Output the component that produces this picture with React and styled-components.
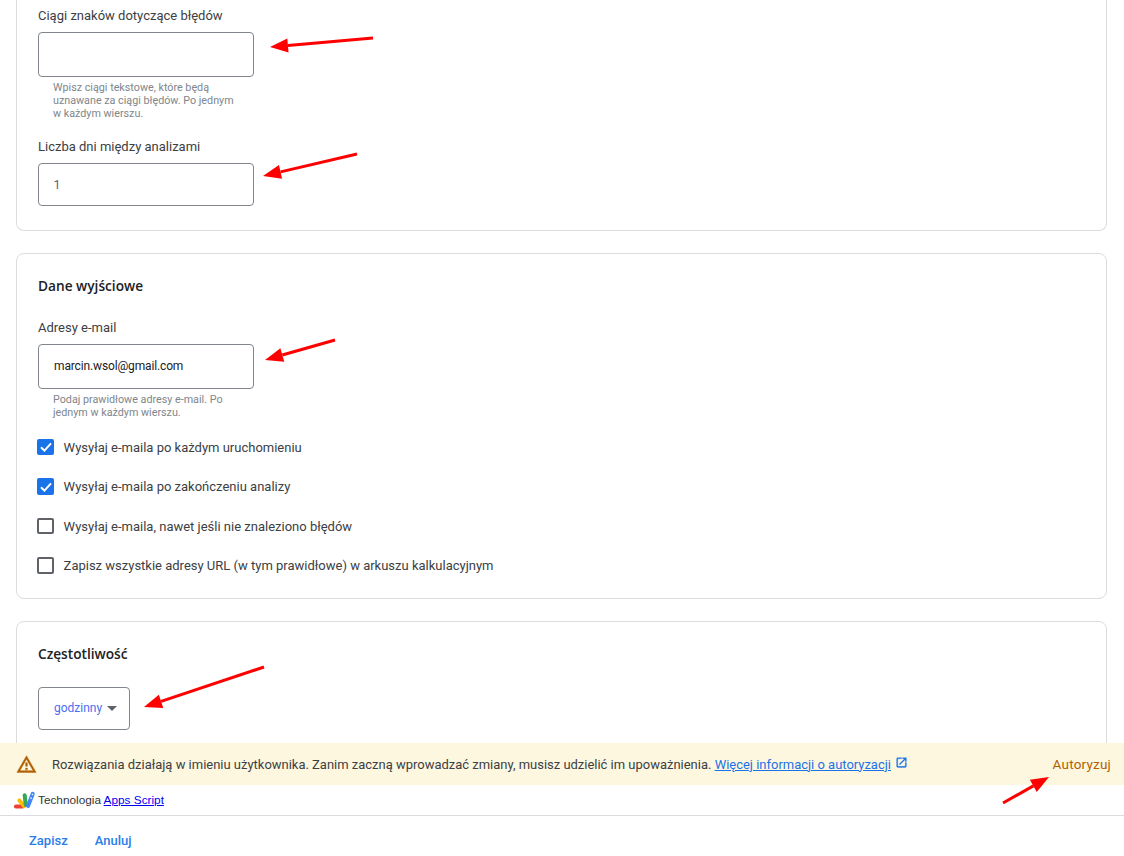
import React from 'react'
import styled, { createGlobalStyle } from 'styled-components'

const Global = createGlobalStyle`
  html, body { margin: 0; padding: 0; background: #fff; }
  body { font-family: Roboto, "Liberation Sans", sans-serif; color: #3c4043; }
`

const Page = styled.div`
  position: relative;
  width: 1124px;
  height: 856px;
  display: flex;
  flex-direction: column;
  overflow: hidden;
`

const Content = styled.main`
  flex: 1;
  min-height: 0;
  overflow: hidden;
  padding: 0 17px 0 16px;
  display: flex;
  flex-direction: column;
  gap: 22px;
`

const Card = styled.section`
  flex: none;
  height: ${p => p.$height}px;
  box-sizing: border-box;
  border: 1px solid #dadce0;
  border-top: ${p => (p.$cut ? 'none' : '1px solid #dadce0')};
  border-radius: ${p => (p.$cut ? '0 0 8px 8px' : '8px')};
  padding: ${p => (p.$cut ? '7px 21px 0' : '23px 21px 0')};
`

const Heading = styled.h2`
  margin: 0 0 24px;
  font-family: "Open Sans", Roboto, sans-serif;
  font-size: 13.7px;
  line-height: 18px;
  font-weight: 600;
  color: #202124;
`

const Label = styled.label`
  display: block;
  font-size: 13px;
  line-height: 17px;
  margin-bottom: 8px;
`

const Field = styled.div`
  width: 216px;
  height: ${p => p.$height}px;
  box-sizing: border-box;
  display: flex;
  align-items: center;
  padding: 0 15px ${p => (p.$dark ? '2px' : '0')} ${p => (p.$dark ? '15px' : '14.5px')};
  border: 1px solid #80868b;
  border-radius: 4px;
  font-size: ${p => (p.$dark ? '12px' : '12.5px')};
  letter-spacing: ${p => (p.$dark ? '-0.14px' : '0')};
  color: ${p => (p.$dark ? '#202124' : '#5f6368')};
`

const Help = styled.p`
  margin: 4px 0 ${p => p.$bottom || 0}px;
  padding-left: 15px;
  width: 190px;
  font-size: 10.75px;
  line-height: 13px;
  color: #80868b;
`

const Checks = styled.div`
  display: flex;
  flex-direction: column;
  gap: 21.5px;
`

const CheckRow = styled.div`
  display: flex;
  align-items: center;
  gap: 9.6px;
  height: 18px;
  font-size: 13px;
`

const Box = styled.span`
  flex: none;
  width: 17px;
  height: 16.5px;
  margin-left: -1px;
  display: flex;
  align-items: center;
  justify-content: center;
  box-sizing: border-box;
  border-radius: 2px;
  background: ${p => (p.$on ? '#1a73e8' : '#fff')};
  border: ${p => (p.$on ? 'none' : '2px solid #5f6368')};
`

const Select = styled.div`
  width: 92px;
  height: 43px;
  box-sizing: border-box;
  display: flex;
  align-items: center;
  gap: 5px;
  padding: 0 0 1px 15px;
  border: 1px solid #80868b;
  border-radius: 4px;
  font-size: 12px;
  color: #4a6ff0;
`

const Caret = styled.span`
  width: 0;
  height: 0;
  margin-top: 1px;
  border-left: 5px solid transparent;
  border-right: 5px solid transparent;
  border-top: 5px solid #5f6368;
`

const Banner = styled.div`
  flex: none;
  height: 42px;
  background: #fef7e0;
  display: flex;
  align-items: center;
  padding: 0 13px 0 16px;
  font-size: 12.98px;
`

const BannerText = styled.span`
  margin-left: 15px;
  flex: 1;
  display: flex;
  align-items: center;
  white-space: pre;
`

const InfoLink = styled.a`
  color: #1a73e8;
  text-decoration: underline;
`

const Authorize = styled.span`
  color: #b06000;
  font-size: 13.5px;
  letter-spacing: 0.2px;
`

const Tech = styled.div`
  flex: none;
  height: 31px;
  box-sizing: border-box;
  display: flex;
  align-items: center;
  gap: 1px;
  padding-left: 13px;
  font-family: "Liberation Sans", Arial, sans-serif;
  font-size: 11.8px;
  color: #333;
  border-bottom: 1px solid #dadce0;
`

const ScriptLink = styled.a`
  color: #0000ee;
  text-decoration: underline;
`

const Footer = styled.footer`
  flex: none;
  height: 40px;
  display: flex;
  align-items: center;
  gap: 27px;
  padding: 8px 0 0 29px;
  box-sizing: border-box;
  font-size: 13px;
  font-weight: 500;
  color: #2a7de9;
`

const Arrows = styled.svg`
  position: absolute;
  left: 0;
  top: 0;
  pointer-events: none;
`

const Tick = () => (
  <svg width="12" height="10" viewBox="0 0 12 10">
    <path d="M1 5.2 4.4 8.6 11 1.4" fill="none" stroke="#fff" strokeWidth="2" />
  </svg>
)

const Check = ({ on, children }) => (
  <CheckRow>
    <Box $on={on}>{on && <Tick />}</Box>
    {children}
  </CheckRow>
)

const WarningIcon = () => (
  <svg width="21" height="21" viewBox="0 0 24 24" fill="#b06000" stroke="#b06000" strokeWidth="0.5">
    <path d="M12 5.99L19.53 19H4.47L12 5.99M12 2L1 21h22L12 2zm1 14h-2v2h2v-2zm0-6h-2v4h2v-4z" />
  </svg>
)

const OpenIcon = () => (
  <svg width="13" height="13" viewBox="0 0 24 24" fill="#1a73e8" stroke="#1a73e8" strokeWidth="0.6" style={{ marginLeft: 4, marginTop: -3 }}>
    <path d="M19 19H5V5h7V3H5c-1.11 0-2 .9-2 2v14c0 1.1.89 2 2 2h14c1.1 0 2-.9 2-2v-7h-2v7zM14 3v2h3.59l-9.83 9.83 1.41 1.41L19 6.41V10h2V3h-7z" />
  </svg>
)

const AppsScriptLogo = () => (
  <svg width="24" height="19" viewBox="0 0 21 17" fill="none" strokeLinecap="round" strokeWidth="3.6">
    <path d="M2.4 13.8h6" stroke="#ea4335" />
    <path d="M5.5 8.5 9.8 13.5" stroke="#fbbc04" />
    <path d="M10.2 3.8 11.2 12.6" stroke="#34a853" />
    <path d="M17.4 2.6 13.2 13.4" stroke="#4285f4" />
    <circle cx="17.2" cy="3.2" r="0.7" fill="#fff" stroke="none" />
    <circle cx="15.9" cy="6.4" r="0.7" fill="#fff" stroke="none" />
  </svg>
)

const arrows = [
  [373, 38, 270, 47],
  [357, 154, 263, 176],
  [335, 340, 265, 360],
  [264, 667, 144, 707],
  [1003, 803, 1049, 777],
]

const Arrow = ({ line: [x1, y1, x2, y2] }) => {
  const len = Math.hypot(x2 - x1, y2 - y1)
  const ux = (x2 - x1) / len
  const uy = (y2 - y1) / len
  const bx = x2 - ux * 18
  const by = y2 - uy * 18
  return (
    <g>
      <line x1={x1} y1={y1} x2={bx} y2={by} stroke="#f00" strokeWidth="3" />
      <polygon
        fill="#f00"
        points={`${x2},${y2} ${bx - uy * 7},${by + ux * 7} ${bx + uy * 7},${by - ux * 7}`}
      />
    </g>
  )
}

export default function App() {
  return (
    <Page>
      <Global />
      <Content>
        <Card $cut $height={231}>
          <Label>Ciągi znaków dotyczące błędów</Label>
          <Field $height={45} />
          <Help $bottom={18}>Wpisz ciągi tekstowe, które będą uznawane za ciągi błędów. Po jednym w każdym wierszu.</Help>
          <Label>Liczba dni między analizami</Label>
          <Field $height={43}>1</Field>
        </Card>
        <Card $height={346}>
          <Heading>Dane wyjściowe</Heading>
          <Label>Adresy e-mail</Label>
          <Field $height={45} $dark>marcin.wsol@gmail.com</Field>
          <Help $bottom={19}>Podaj prawidłowe adresy e-mail. Po jednym w każdym wierszu.</Help>
          <Checks>
            <Check on>Wysyłaj e-maila po każdym uruchomieniu</Check>
            <Check on>Wysyłaj e-maila po zakończeniu analizy</Check>
            <Check>Wysyłaj e-maila, nawet jeśli nie znaleziono błędów</Check>
            <Check>Zapisz wszystkie adresy URL (w tym prawidłowe) w arkuszu kalkulacyjnym</Check>
          </Checks>
        </Card>
        <Card $height={200}>
          <Heading>Częstotliwość</Heading>
          <Select>godzinny <Caret /></Select>
        </Card>
      </Content>
      <Banner>
        <WarningIcon />
        <BannerText>
          Rozwiązania działają w imieniu użytkownika. Zanim zaczną wprowadzać zmiany, musisz udzielić im upoważnienia.{' '}
          <InfoLink>Więcej informacji o autoryzacji</InfoLink>
          <OpenIcon />
        </BannerText>
        <Authorize>Autoryzuj</Authorize>
      </Banner>
      <Tech>
        <AppsScriptLogo />
        <span>Technologia <ScriptLink>Apps Script</ScriptLink></span>
      </Tech>
      <Footer>
        <span>Zapisz</span>
        <span>Anuluj</span>
      </Footer>
      <Arrows width="1124" height="856">
        {arrows.map(a => <Arrow key={a[0]} line={a} />)}
      </Arrows>
    </Page>
  )
}
